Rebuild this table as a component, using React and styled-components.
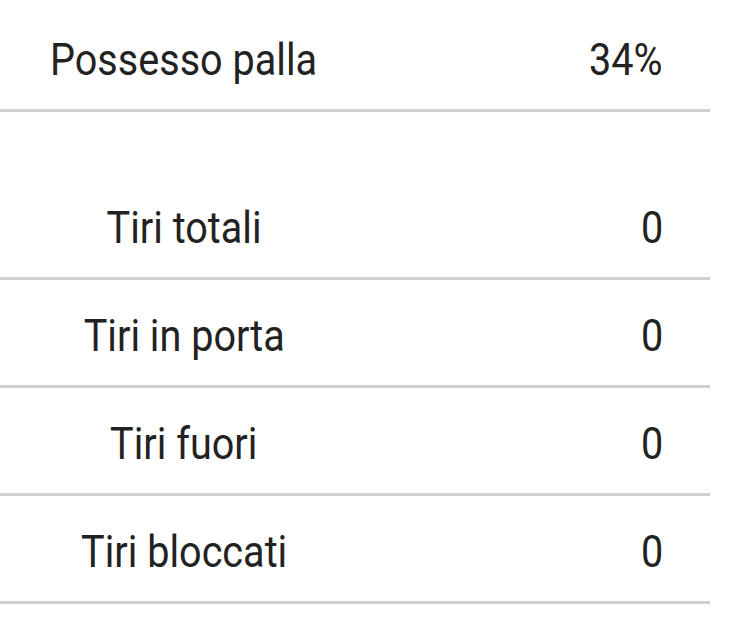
import React from 'react';
import styled, { createGlobalStyle } from 'styled-components';

const GlobalStyle = createGlobalStyle`
  html, body {
    margin: 0;
    padding: 0;
    background: #ffffff;
  }

  body {
    font-family: Roboto, 'Noto Sans', sans-serif;
    color: #222222;
  }
`;

const possession = { label: 'Possesso palla', value: '34%' };

const shots = [
  { label: 'Tiri totali', value: 0 },
  { label: 'Tiri in porta', value: 0 },
  { label: 'Tiri fuori', value: 0 },
  { label: 'Tiri bloccati', value: 0 },
];

const App = () => {
  return (
    <>
      <GlobalStyle />
      <Wrapper>
        <Row $height={112} $shift={9}>
          <LabelCell $align="left">
            <Text $origin="left">{possession.label}</Text>
          </LabelCell>
          <ValueCell>
            <Text $origin="right">{possession.value}</Text>
          </ValueCell>
        </Row>

        <Spacer />

        {shots.map((stat) => (
          <Row key={stat.label} $height={108} $shift={6}>
            <LabelCell $align="center">
              <Text $origin="center">{stat.label}</Text>
            </LabelCell>
            <ValueCell>
              <Text $origin="right">{stat.value}</Text>
            </ValueCell>
          </Row>
        ))}
      </Wrapper>
    </>
  );
};

const Wrapper = styled.section`
  display: flex;
  flex-direction: column;
  width: 710px;
`;

const Row = styled.div`
  display: grid;
  grid-template-columns: 368px 1fr;
  align-items: center;
  height: ${({ $height }) => $height}px;
  padding-top: ${({ $shift }) => $shift}px;
  box-sizing: border-box;
  border-bottom: 3px solid #cfcfcf;
  font-size: 45px;
  line-height: 1;
`;

const LabelCell = styled.div`
  display: flex;
  justify-content: ${({ $align }) =>
    $align === 'left' ? 'flex-start' : 'center'};
  padding-left: ${({ $align }) => ($align === 'left' ? '50px' : '0')};
  white-space: nowrap;
`;

const ValueCell = styled.div`
  display: flex;
  justify-content: flex-end;
  padding-right: 47px;
`;

const Text = styled.span`
  display: inline-block;
  transform: scaleX(0.88);
  transform-origin: ${({ $origin }) => $origin} center;
  white-space: nowrap;
`;

const Spacer = styled.div`
  height: 60px;
`;

export default App;
